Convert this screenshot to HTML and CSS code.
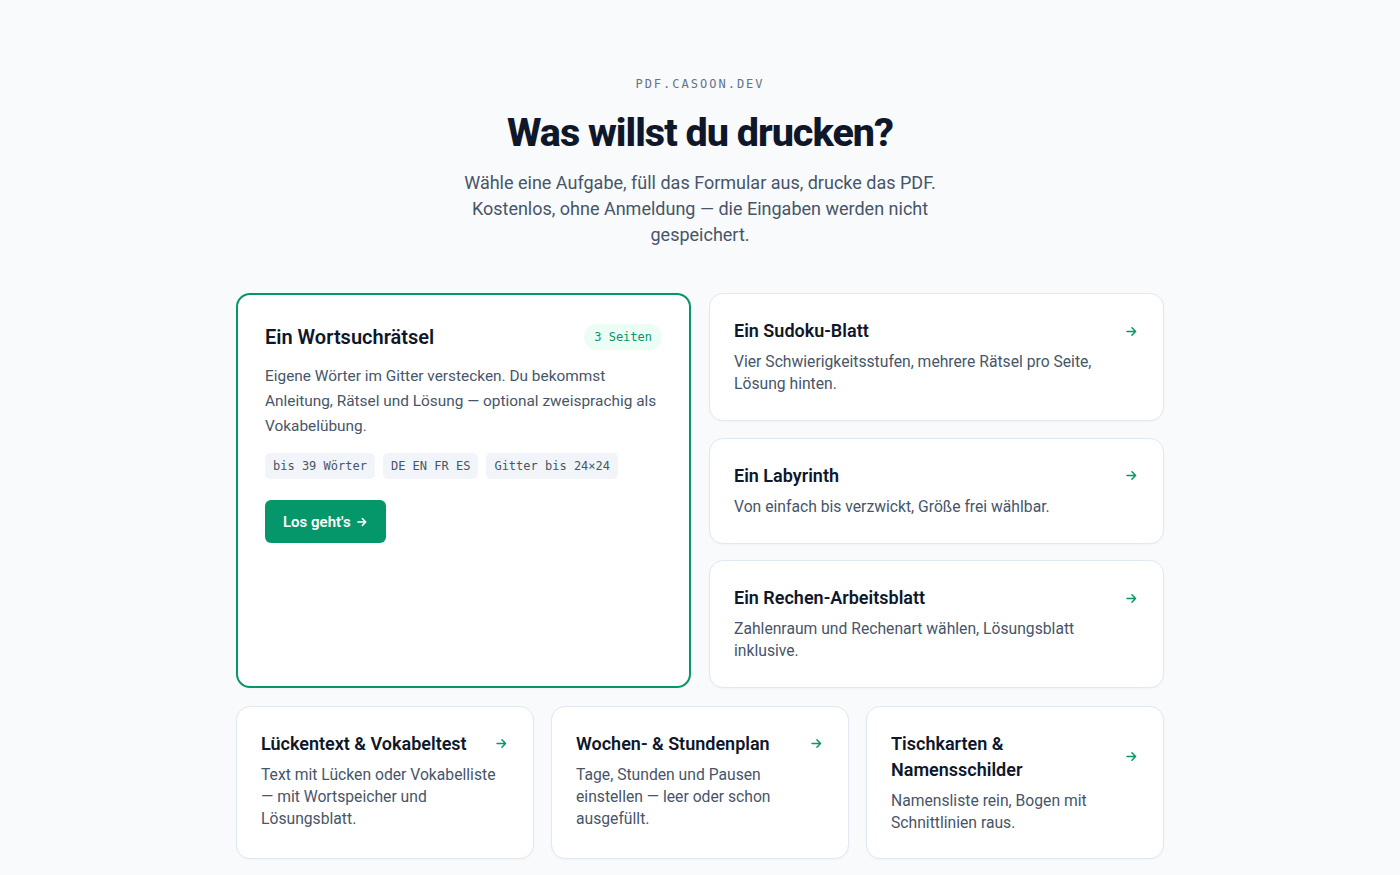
FILE: index.html
```html
<!DOCTYPE html>
<html lang="de">
<head>
<meta charset="utf-8">
<title>Was willst du drucken?</title>
<link rel="stylesheet" href="styles.css">
</head>
<body>
<main class="page">
  <header class="intro">
    <div class="eyebrow">PDF.CASOON.DEV</div>
    <h1 class="headline">Was willst du drucken?</h1>
    <p class="lead">Wähle eine Aufgabe, füll das Formular aus, drucke das PDF. Kostenlos, ohne Anmeldung — die Eingaben werden nicht gespeichert.</p>
  </header>

  <section class="top-grid">
    <article class="card card-featured">
      <div class="card-head">
        <h2 class="featured-title">Ein Wortsuchrätsel</h2>
        <span class="badge">3 Seiten</span>
      </div>
      <p class="featured-desc">Eigene Wörter im Gitter verstecken. Du bekommst Anleitung, Rätsel und Lösung — optional zweisprachig als Vokabelübung.</p>
      <div class="tags">
        <span class="tag">bis 39 Wörter</span>
        <span class="tag">DE EN FR ES</span>
        <span class="tag">Gitter bis 24×24</span>
      </div>
      <a class="btn" href="#">Los geht's <svg class="btn-arrow" viewBox="0 0 16 16" aria-hidden="true"><path d="M2.5 8h10.5M8.5 3.5L13 8l-4.5 4.5"/></svg></a>
    </article>

    <div class="stack">
      <article class="card">
        <div class="card-head">
          <h3 class="card-title">Ein Sudoku-Blatt</h3>
          <svg class="arrow" viewBox="0 0 16 16" aria-hidden="true"><path d="M2.5 8h10.5M8.5 3.5L13 8l-4.5 4.5"/></svg>
        </div>
        <p class="card-desc">Vier Schwierigkeitsstufen, mehrere Rätsel pro Seite, Lösung hinten.</p>
      </article>
      <article class="card">
        <div class="card-head">
          <h3 class="card-title">Ein Labyrinth</h3>
          <svg class="arrow" viewBox="0 0 16 16" aria-hidden="true"><path d="M2.5 8h10.5M8.5 3.5L13 8l-4.5 4.5"/></svg>
        </div>
        <p class="card-desc">Von einfach bis verzwickt, Größe frei wählbar.</p>
      </article>
      <article class="card">
        <div class="card-head">
          <h3 class="card-title">Ein Rechen-Arbeitsblatt</h3>
          <svg class="arrow" viewBox="0 0 16 16" aria-hidden="true"><path d="M2.5 8h10.5M8.5 3.5L13 8l-4.5 4.5"/></svg>
        </div>
        <p class="card-desc">Zahlenraum und Rechenart wählen, Lösungsblatt inklusive.</p>
      </article>
    </div>
  </section>

  <section class="bottom-grid">
    <article class="card">
      <div class="card-head">
        <h3 class="card-title">Lückentext &amp; Vokabeltest</h3>
        <svg class="arrow" viewBox="0 0 16 16" aria-hidden="true"><path d="M2.5 8h10.5M8.5 3.5L13 8l-4.5 4.5"/></svg>
      </div>
      <p class="card-desc">Text mit Lücken oder Vokabelliste — mit Wortspeicher und Lösungsblatt.</p>
    </article>
    <article class="card">
      <div class="card-head">
        <h3 class="card-title">Wochen- &amp; Stundenplan</h3>
        <svg class="arrow" viewBox="0 0 16 16" aria-hidden="true"><path d="M2.5 8h10.5M8.5 3.5L13 8l-4.5 4.5"/></svg>
      </div>
      <p class="card-desc">Tage, Stunden und Pausen einstellen — leer oder schon ausgefüllt.</p>
    </article>
    <article class="card">
      <div class="card-head">
        <h3 class="card-title">Tischkarten &amp; Namensschilder</h3>
        <svg class="arrow" viewBox="0 0 16 16" aria-hidden="true"><path d="M2.5 8h10.5M8.5 3.5L13 8l-4.5 4.5"/></svg>
      </div>
      <p class="card-desc">Namensliste rein, Bogen mit Schnittlinien raus.</p>
    </article>
  </section>
</main>
</body>
</html>
```

FILE: styles.css
```css
* { box-sizing: border-box; }

body {
  margin: 0;
  background: #f8fafc;
  font-family: Roboto, "Liberation Sans", sans-serif;
  color: #0f172a;
}

.page {
  width: 928px;
  margin: 0 auto;
  padding: 74px 0 40px;
}

.intro {
  display: flex;
  flex-direction: column;
  align-items: center;
  text-align: center;
}

.eyebrow {
  font-family: "DejaVu Sans Mono", monospace;
  font-size: 12px;
  line-height: 20px;
  letter-spacing: 2px;
  color: #64748b;
}

.headline {
  margin: 16px 0 0;
  font-size: 39.5px;
  line-height: 46px;
  font-weight: 800;
  letter-spacing: -1px;
  color: #0f172a;
}

.lead {
  margin: 14px 0 0;
  max-width: 480px;
  font-size: 18px;
  line-height: 26px;
  color: #475569;
}

.top-grid {
  margin-top: 45px;
  display: grid;
  grid-template-columns: 1fr 1fr;
  gap: 18px;
}

.stack {
  display: flex;
  flex-direction: column;
  gap: 16.5px;
}

.bottom-grid {
  margin-top: 17.5px;
  display: grid;
  grid-template-columns: repeat(3, 1fr);
  gap: 17px;
}

.card {
  background: #fff;
  border: 1px solid #e2e8f0;
  border-radius: 14px;
  padding: 24px 24px 25px;
  box-shadow: 0 1px 2px rgba(15, 23, 42, 0.03);
}

.bottom-grid .card {
  padding-bottom: 24px;
}

.card-featured {
  border: 2px solid #059669;
  padding: 28px 27px;
}

.card-head {
  display: flex;
  align-items: center;
  justify-content: space-between;
  gap: 16px;
}

.card-title {
  margin: 0;
  font-size: 18px;
  line-height: 26px;
  font-weight: 600;
  color: #0f172a;
}

.arrow {
  flex: none;
  width: 13px;
  height: 13px;
  margin-right: 1px;
  fill: none;
  stroke: #059669;
  stroke-width: 1.8;
  stroke-linecap: round;
  stroke-linejoin: round;
}

.card-desc {
  margin: 7px 0 0;
  font-size: 15.7px;
  line-height: 22px;
  color: #475569;
}

.featured-title {
  margin: 0;
  font-size: 20px;
  line-height: 28px;
  font-weight: 600;
  color: #0f172a;
}

.badge {
  flex: none;
  font-family: "DejaVu Sans Mono", monospace;
  font-size: 12px;
  line-height: 26px;
  padding: 0 10px;
  border-radius: 13px;
  background: #ecfdf5;
  color: #059669;
}

.featured-desc {
  margin: 13px 0 0;
  font-size: 15.4px;
  line-height: 25px;
  color: #475569;
}

.tags {
  margin-top: 14px;
  display: flex;
  flex-wrap: wrap;
  gap: 8px;
}

.tag {
  font-family: "DejaVu Sans Mono", monospace;
  font-size: 12px;
  line-height: 26px;
  padding: 0 8px;
  border-radius: 5px;
  background: #f1f5f9;
  color: #475569;
}

.btn {
  display: inline-flex;
  align-items: center;
  gap: 5px;
  margin-top: 21px;
  padding: 0 18px;
  height: 43px;
  border-radius: 6px;
  background: #059669;
  color: #fff;
  font-size: 15px;
  font-weight: 600;
  text-decoration: none;
}

.btn-arrow {
  width: 12px;
  height: 12px;
  fill: none;
  stroke: #fff;
  stroke-width: 2;
  stroke-linecap: round;
  stroke-linejoin: round;
}
```
